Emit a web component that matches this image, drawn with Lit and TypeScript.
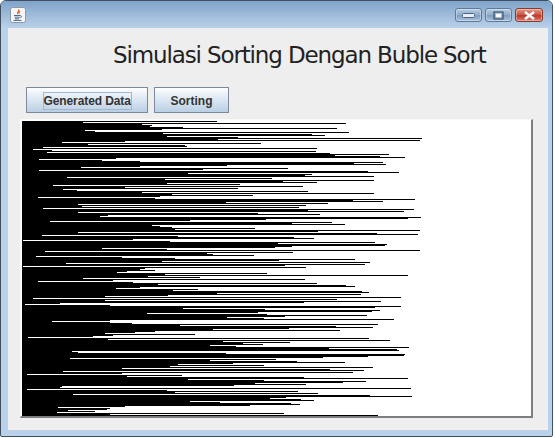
import { LitElement, html, css, svg } from "lit";
import { customElement } from "lit/decorators.js";

const ENDS: Record<number, number> = {
121:217,122:83,123:346,124:142,125:152,126:150,127:183,128:337,129:162,130:85,131:95,132:349,133:163,134:312,135:325,136:167,137:238,138:422,139:218,140:420,141:125,142:62,143:261,144:88,145:185,146:187,147:43,148:317,149:33,150:52,151:316,152:47,153:330,154:389,155:335,156:380,157:405,158:116,159:39,160:102,161:140,162:383,163:354,164:386,165:227,166:140,167:81,168:288,169:203,170:39,171:368,172:399,173:188,174:312,175:305,176:374,177:67,178:272,179:165,180:374,181:283,182:317,183:167,184:240,185:53,186:303,187:125,188:238,189:63,190:77,191:308,192:142,193:374,194:172,195:253,196:160,197:38,198:155,199:415,200:353,201:383,202:226,203:328,204:78,205:306,206:82,207:299,208:43,209:414,210:308,211:404,212:78,213:258,214:320,215:108,216:100,217:421,218:408,219:266,
220:190,221:50,222:332,223:292,224:345,225:152,226:160,227:172,228:255,229:175,230:420,231:318,232:78,233:377,234:418,235:42,236:178,237:294,238:314,239:133,240:23,241:170,242:375,243:278,244:387,245:385,246:292,247:275,248:102,249:167,250:420,251:45,252:293,253:207,254:213,255:254,256:36,257:122,258:175,259:355,260:279,261:162,262:370,263:66,264:365,265:285,266:23,267:306,268:145,269:140,270:155,271:127,272:117,273:267,274:165,275:408,276:148,277:200,278:83,279:305,280:113,281:38,282:133,283:317,284:158,285:346,286:355,287:140,288:116,289:198,290:173,291:362,292:369,293:217,294:361,295:168,296:105,297:401,298:33,299:337,300:105,301:381,302:304,303:60,304:25,305:110,306:401,307:375,308:183,309:265,310:380,311:372,312:258,313:147,314:267,315:367,316:285,317:227,318:264,319:394,320:110,321:52,322:110,323:132,324:378,325:180,326:336,327:373,328:289,329:213,
330:340,331:155,332:135,333:105,334:195,335:113,336:93,337:28,338:369,339:108,340:390,341:223,342:290,343:243,344:263,345:210,346:236,347:409,348:329,349:397,350:399,351:72,352:78,353:226,354:405,355:404,356:368,357:323,358:70,359:276,360:210,361:297,362:345,363:233,364:178,365:264,366:170,367:373,368:122,369:330,370:364,371:63,372:353,373:122,374:27,375:182,376:127,377:304,378:408,379:188,380:264,381:366,382:343,383:255,384:306,385:234,386:62,387:60,388:411,389:27,390:167,391:298,392:175,393:318,394:73,395:370,396:412,397:286,398:270,399:301,400:314,401:190,402:220,403:291,404:300,405:250,406:125,407:58,408:110,409:107,410:68,411:95,412:57,413:284,414:110,415:378,
};

const ROWS = Array.from({ length: 295 }, (_, i) => ENDS[121 + i] ?? 150);

@customElement("app-root")
export class AppRoot extends LitElement {
  static styles = css`
    :host { display: block; width: 555px; height: 438px; background: #fff; overflow: hidden; }
    .window {
      width: 553px; height: 437px; box-sizing: border-box;
      display: flex; flex-direction: column;
      border: 1px solid #3f4f5f; border-radius: 6px 6px 2px 2px;
      background: #b9d1ea;
      padding: 0 4px 6px 7px;
    }
    .titlebar {
      height: 27px; flex: none; margin: 0 -4px 0 -7px; padding: 0 9px 0 9px;
      display: flex; align-items: center; justify-content: space-between;
      background: linear-gradient(#7fa3ca, #a3bfdd 60%, #b9d1ea);
      border-radius: 5px 5px 0 0;
      box-sizing: border-box;
    }
    .icon { width: 16px; height: 16px; display: block; }
    .controls { display: flex; gap: 3px; padding-top: 6px; padding-bottom: 5px; box-sizing: border-box; }
    .ctl {
      height: 14px; width: 27px; box-sizing: border-box; border: 1px solid #5d7a99; border-radius: 3px;
      background: linear-gradient(#b7cde3, #8eacca 50%, #7f9fc0 55%, #a9c3dc);
      display: flex; align-items: center; justify-content: center;
      box-shadow: inset 0 0 0 1px rgba(255,255,255,.35);
    }
    .ctl.close {
      width: 28px; border-color: #8a3a2e;
      background: linear-gradient(#e09a8c, #c9523f 50%, #b8392a 55%, #d9806e);
    }
    .ctl svg { display: block; }
    .client {
      flex: 1; background: #eeeeee; display: flex; flex-direction: column;
      padding: 0 14px 9px 12px; min-height: 0;
      border-bottom: 2px solid #f4efe9;
    }
    .heading {
      margin: 0; padding: 13px 0 0 93px; height: 46px; box-sizing: border-box; white-space: nowrap;
      font: 400 23px "DejaVu Sans", sans-serif; letter-spacing: -1.13px; color: #222; line-height: 29px;
    }
    .buttons { display: flex; gap: 6px; padding-left: 6px; height: 26px; margin-top: 13px; }
    button {
      height: 26px; box-sizing: border-box; padding: 1px 0 0; margin: 0;
      border: 1px solid #7a8a99;
      background: linear-gradient(#ffffff, #eaf1f8 25%, #c4d6e8 85%, #b8cfe5);
      font: 700 12px "Liberation Sans", sans-serif; color: #333; white-space: nowrap;
      display: flex; align-items: center; justify-content: center;
    }
    .b1 { width: 122px; }
    .b2 { width: 75px; }
    .focus { border: 1px solid #a3b8cc; padding: 2px 0 1px; width: 89px; height: 18px; box-sizing: border-box; line-height: 13px; letter-spacing: -.1px; }
    .chart {
      margin-top: 6px; width: 513px; height: 299px; box-sizing: border-box; flex: none;
      background: #fff; border-style: solid; border-width: 1px 2px 2px 1px;
      border-color: #fafafa #7e7e7e #7e7e7e #fafafa;
      padding: 1px 0 0 1px;
    }
    .chart svg { display: block; }
  `;

  render() {
    return html`
      <div class="window">
        <div class="titlebar">
          <svg class="icon" viewBox="0 0 16 16">
            <rect x="0.5" y="0.5" width="15" height="15" rx="2" fill="#f4f6f8" stroke="#8a98a8"/>
            <path d="M8.5 2.5c1.5 1.5-2 2.5-.8 4.5M10 4c-1 1-2 1.6-.7 3" fill="none" stroke="#d8622a" stroke-width="1.1"/>
            <path d="M4 8.5h6M4.5 10.2h5M5 11.9h4M10 8.6c2 0 2 2-.4 2.2M3.5 13.4h8" fill="none" stroke="#4a6a94" stroke-width="1"/>
          </svg>
          <div class="controls">
            <div class="ctl">
              <svg width="13" height="5" viewBox="0 0 13 5"><rect x="0.5" y="0.5" width="12" height="4" rx="1" fill="#e9eff6" stroke="#4d6680"/></svg>
            </div>
            <div class="ctl">
              <svg width="11" height="9" viewBox="0 0 11 9"><rect x="1" y="1" width="9" height="7" fill="none" stroke="#2f4256" stroke-width="1"/><rect x="3" y="3" width="5" height="3" fill="#fff" stroke="#e9eff6" stroke-width=".5"/></svg>
            </div>
            <div class="ctl close">
              <svg width="13" height="9" viewBox="0 0 13 9"><path d="M2 1l9 7M11 1l-9 7" stroke="#fff" stroke-width="2.4" fill="none"/></svg>
            </div>
          </div>
        </div>
        <div class="client">
          <h1 class="heading">Simulasi Sorting Dengan Buble Sort</h1>
          <div class="buttons">
            <button class="b1"><span class="focus">Generated Data</span></button>
            <button class="b2">Sorting</button>
          </div>
          <div class="chart">
            <svg width="510" height="295" viewBox="0 0 510 295" shape-rendering="crispEdges">
              ${ROWS.map((end, i) => svg`<rect x="0" y=${i} width=${end - 22} height="1" fill="#000"></rect>`)}
            </svg>
          </div>
        </div>
      </div>
    `;
  }
}
